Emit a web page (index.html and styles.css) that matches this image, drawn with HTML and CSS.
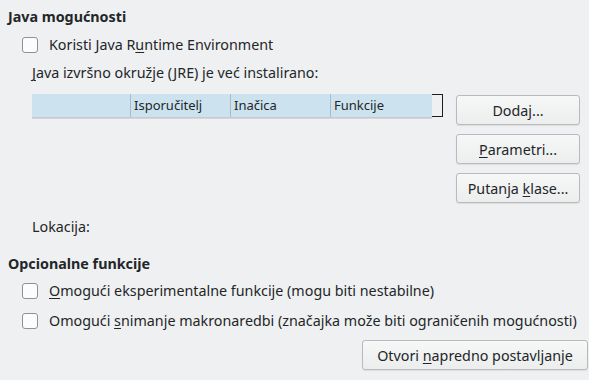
FILE: index.html
```html
<!DOCTYPE html>
<html>
<head>
<meta charset="utf-8">
<link rel="stylesheet" href="styles.css">
</head>
<body>
<div class="page">
  <div class="heading">Java mogućnosti</div>
  <label class="check-row first">
    <span class="box"></span>
    <span class="text">Koristi Java R<u>u</u>ntime Environment</span>
  </label>
  <div class="sub-label jre"><u>J</u>ava izvršno okružje (JRE) je već instalirano:</div>
  <div class="jre-area">
    <div class="table">
      <div class="thead">
        <div class="col c0"></div>
        <div class="col c1">Isporučitelj</div>
        <div class="col c2">Inačica</div>
        <div class="col c3">Funkcije</div>
        <div class="col c4"></div>
      </div>
      <div class="shadow"></div>
    </div>
    <div class="buttons">
      <button class="btn">Doda<u>j</u>...</button>
      <button class="btn"><u>P</u>arametri...</button>
      <button class="btn">Putanja <u>k</u>lase...</button>
    </div>
  </div>
  <div class="sub-label loc">Lokacija:</div>
  <div class="heading h2">Opcionalne funkcije</div>
  <label class="check-row c2row">
    <span class="box"></span>
    <span class="text"><u>O</u>mogući eksperimentalne funkcije (mogu biti nestabilne)</span>
  </label>
  <label class="check-row c3row">
    <span class="box"></span>
    <span class="text">Omogući <u>s</u>nimanje makronaredbi (značajka može biti ograničenih mogućnosti)</span>
  </label>
  <div class="bottom-row">
    <button class="btn wide">Otvori <u>n</u>apredno postavljanje</button>
  </div>
</div>
</body>
</html>
```

FILE: styles.css
```css
html, body {
  margin: 0;
  padding: 0;
  background: #eff0f1;
}
body {
  font-family: "Noto Sans", "DejaVu Sans", sans-serif;
  font-size: 14.3px;
  color: #232629;
  width: 589px;
  height: 380px;
  overflow: hidden;
}
.page {
  padding: 8px 0 0 8px;
  display: flex;
  flex-direction: column;
}
u {
  text-decoration: underline;
  text-underline-offset: 2px;
  text-decoration-thickness: 1px;
}
.heading {
  font-weight: bold;
  line-height: 18px;
  height: 18px;
}
.check-row {
  display: flex;
  align-items: center;
  height: 16px;
  padding-left: 14px;
  gap: 11px;
  line-height: 16px;
}
.check-row.first { margin-top: 11px; }
.check-row.c2row { margin-top: 10px; }
.check-row.c3row { margin-top: 14px; }
.box {
  width: 14px;
  height: 14px;
  border: 1px solid #8e9295;
  border-radius: 3px;
  background: #fcfcfc;
  flex: none;
}
.sub-label {
  padding-left: 24px;
  line-height: 18px;
  height: 18px;
}
.sub-label.jre { margin-top: 11px; }
.sub-label.loc { margin-top: 15px; }
.heading.h2 { margin-top: 19px; }
.jre-area {
  display: flex;
  margin-top: 12px;
  padding-left: 24px;
  padding-right: 9px;
  gap: 13px;
}
.table {
  width: 411px;
  flex: none;
}
.thead {
  display: flex;
  height: 23px;
}
.col {
  background: #cce3ef;
  line-height: 23px;
  padding-left: 3px;
  box-sizing: border-box;
  border-right: 1px solid #a9bcc8;
  white-space: nowrap;
  font-size: 13px;
}
.c0 { width: 99px; }
.c1 { width: 100px; }
.c2 { width: 100px; }
.c3 { width: 101px; border-right: none; }
.c4 {
  width: 11px;
  background: #eff0f1;
  border: 1px solid #1c1e20;
  border-left: none;
  padding: 0;
}
.shadow {
  width: 400px;
  height: 2px;
  background: linear-gradient(#bfc2c5, #dcdee0);
}
.buttons {
  display: flex;
  flex-direction: column;
  gap: 9px;
  margin-top: 1px;
}
.btn {
  font-family: inherit;
  font-size: 14.3px;
  color: #232629;
  height: 30px;
  width: 124px;
  border: 1px solid #b8babc;
  border-radius: 3px;
  background: linear-gradient(#f6f7f7, #eceded);
  box-shadow: 0 1px 1px rgba(0,0,0,0.08);
  padding: 0;
  box-sizing: border-box;
}
.btn.wide {
  width: 226px;
}
.bottom-row {
  display: flex;
  justify-content: flex-end;
  margin-top: 11px;
  padding-right: 1px;
}
```
